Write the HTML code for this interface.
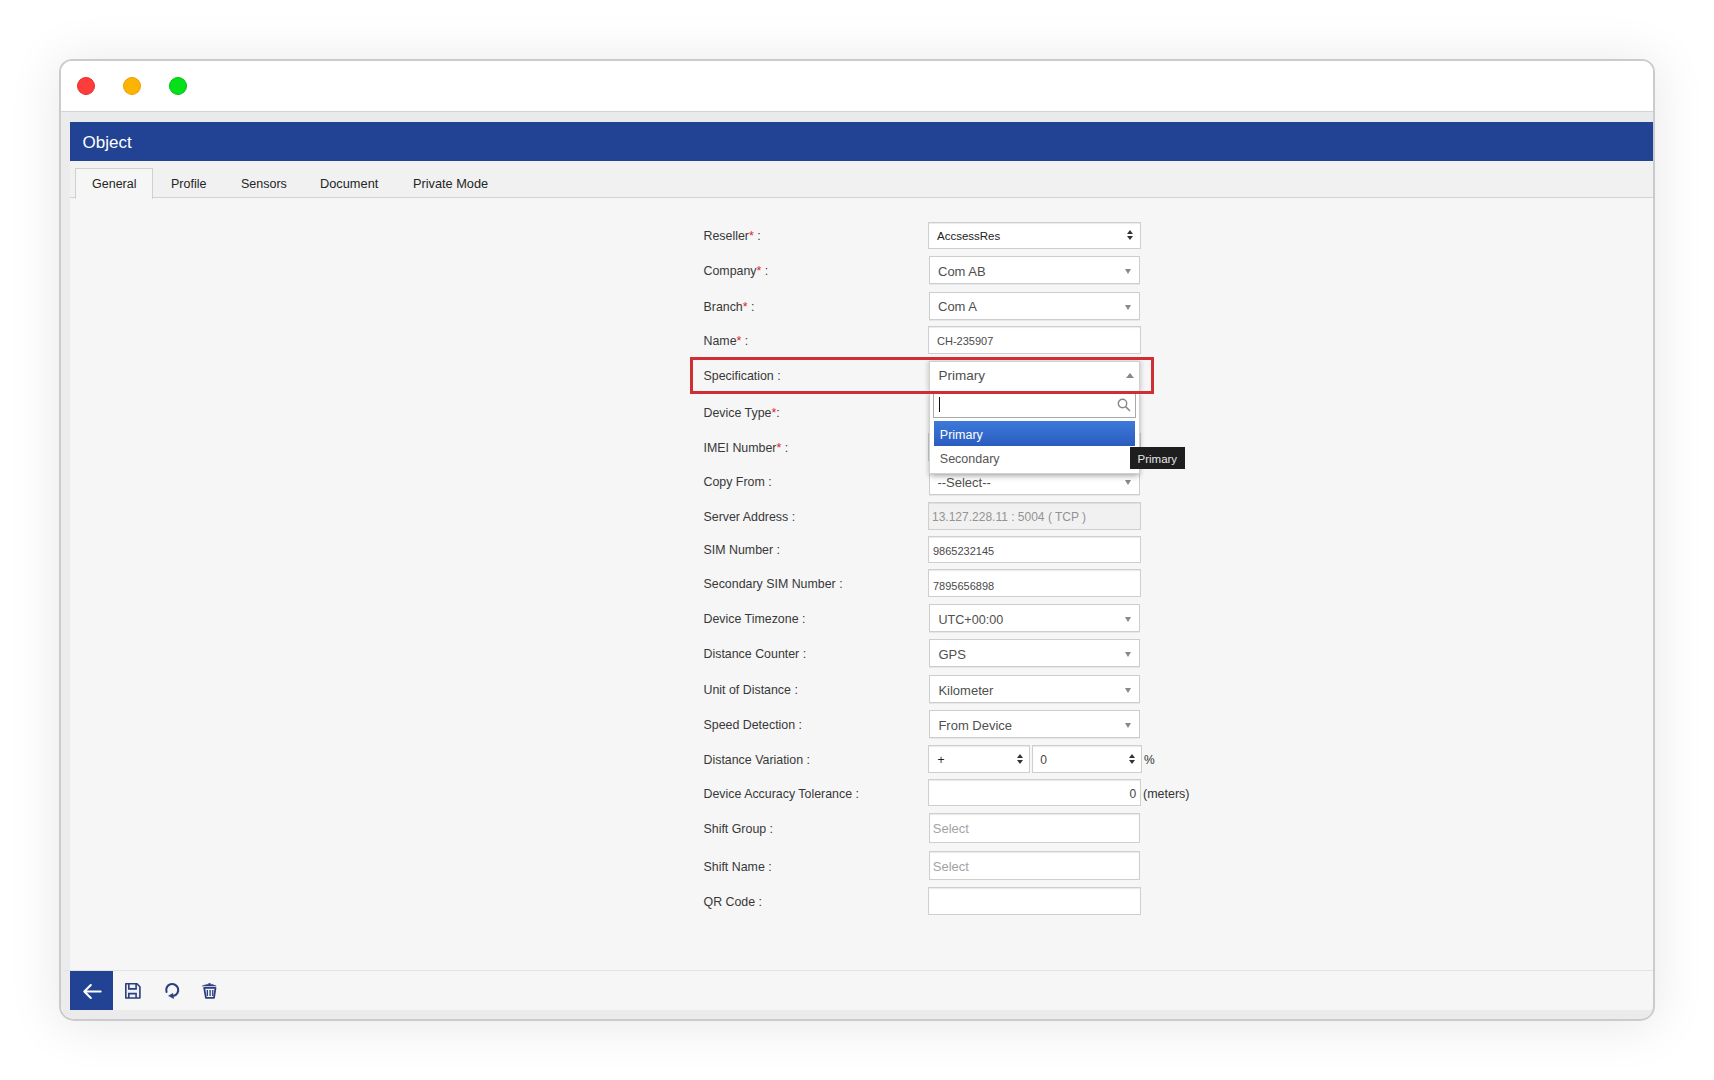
<!DOCTYPE html>
<html><head><meta charset="utf-8">
<style>
*{box-sizing:border-box;margin:0;padding:0}
html,body{width:1714px;height:1080px;overflow:hidden;background:#fff;font-family:"Liberation Sans",sans-serif}
.abs{position:absolute}
#shadow{position:absolute;left:59px;top:59px;width:1596px;height:962px;border-radius:13px 13px 15px 15px;box-shadow:0 3px 50px 4px rgba(0,0,0,0.085)}
#win{position:absolute;left:59px;top:59px;width:1596px;height:962px;border:2px solid #c9cbcd;border-radius:13px 13px 15px 15px;overflow:hidden;background:#f6f6f6}
.dot{position:absolute;width:18px;height:18px;border-radius:50%}
.lbl{position:absolute;left:703.5px;font-size:12.4px;color:#383838;white-space:nowrap;line-height:16px}
.lbl b{color:#d9262a;font-weight:normal}
.inp{position:absolute;background:#fff;border:1px solid #cfcfcf;box-shadow:inset 0 1px 1px rgba(0,0,0,0.09)}
.sel{position:absolute;background:#fff;border:1px solid #cdcdcd;box-shadow:0 1px 0 rgba(0,0,0,0.06)}
.txt{position:absolute;white-space:nowrap;line-height:16px}
.tri{position:absolute;width:0;height:0;border-left:3.75px solid transparent;border-right:3.75px solid transparent;border-top:5px solid #888}
.triu{position:absolute;width:0;height:0;border-left:4px solid transparent;border-right:4px solid transparent;border-bottom:5px solid #888}
.ud{position:absolute;width:8px;height:10px}
.ud:before{content:"";position:absolute;left:0.5px;top:0;border-left:3.5px solid transparent;border-right:3.5px solid transparent;border-bottom:4px solid #333}
.ud:after{content:"";position:absolute;left:0.5px;top:5.5px;border-left:3.5px solid transparent;border-right:3.5px solid transparent;border-top:4px solid #333}
</style></head>
<body>
<div id="shadow"></div>
<div id="win">
  <div class="abs" style="left:0;top:0;width:1592px;height:51px;background:#fff;border-bottom:1px solid #d2d3d4"></div>
  <div class="dot" style="left:16px;top:16px;background:#fc3d39;border:0.5px solid #e3302e"></div>
  <div class="dot" style="left:62px;top:16px;background:#fdb302;border:0.5px solid #e9a200"></div>
  <div class="dot" style="left:108px;top:16px;background:#05e01b;border:0.5px solid #03bf14"></div>
  <div class="abs" style="left:0;top:51px;width:1592px;height:10px;background:#e9eaeb"></div>
  <div class="abs" style="left:0;top:51px;width:9px;height:900px;background:#ececee"></div>
  <div class="abs" style="left:9px;top:61px;width:1583px;height:39px;background:#224294"></div>
  <div class="txt" style="left:21.5px;top:71.5px;font-size:17px;line-height:20px;color:#fff">Object</div>
  <div class="abs" style="left:9px;top:100px;width:1583px;height:37px;background:#f1f1f1;border-bottom:1px solid #d3d3d3"></div>
  <div class="abs" style="left:14px;top:107px;width:78px;height:31px;background:#f6f6f6;border:1px solid #d0d0d0;border-bottom:none"></div>
  <div class="txt" style="left:31px;top:114.5px;font-size:12.5px;color:#252525">General</div>
  <div class="txt" style="left:110px;top:114.5px;font-size:12.5px;color:#252525">Profile</div>
  <div class="txt" style="left:180px;top:114.5px;font-size:12.5px;color:#252525">Sensors</div>
  <div class="txt" style="left:259px;top:114.5px;font-size:12.8px;color:#252525">Document</div>
  <div class="txt" style="left:352px;top:114.5px;font-size:12.75px;color:#252525">Private Mode</div>
  <div class="abs" style="left:3px;top:909px;width:1589px;height:1px;background:#e3e3e3"></div>
  <div class="abs" style="left:0;top:949px;width:1592px;height:10px;background:#ebebeb"></div>
  <div class="abs" style="left:9px;top:910px;width:43px;height:39px;background:#224294"></div>
</div>
<div id="form" class="abs" style="left:0;top:0">
<div class="lbl" style="top:228.1px">Reseller<b>*</b> :</div>
<div class="lbl" style="top:262.8px">Company<b>*</b> :</div>
<div class="lbl" style="top:298.6px">Branch<b>*</b> :</div>
<div class="lbl" style="top:332.8px">Name<b>*</b> :</div>
<div class="lbl" style="top:367.8px">Specification :</div>
<div class="lbl" style="top:405.2px">Device Type<b>*</b>:</div>
<div class="lbl" style="top:439.8px">IMEI Number<b>*</b> :</div>
<div class="lbl" style="top:474.3px">Copy From :</div>
<div class="lbl" style="top:508.5px">Server Address :</div>
<div class="lbl" style="top:542.3px">SIM Number :</div>
<div class="lbl" style="top:575.5px">Secondary SIM Number :</div>
<div class="lbl" style="top:610.9px">Device Timezone :</div>
<div class="lbl" style="top:646.4px">Distance Counter :</div>
<div class="lbl" style="top:681.9px">Unit of Distance :</div>
<div class="lbl" style="top:717.2px">Speed Detection :</div>
<div class="lbl" style="top:752.1px">Distance Variation :</div>
<div class="lbl" style="top:785.6px">Device Accuracy Tolerance :</div>
<div class="lbl" style="top:821.1px">Shift Group :</div>
<div class="lbl" style="top:858.7px">Shift Name :</div>
<div class="lbl" style="top:894.2px">QR Code :</div>
<div class="inp" style="left:928px;top:222px;width:213px;height:27px;"></div>
<div class="sel" style="left:929px;top:256px;width:211px;height:28px;"></div>
<div class="sel" style="left:929px;top:292px;width:211px;height:28px;"></div>
<div class="inp" style="left:928px;top:326px;width:213px;height:28px;"></div>
<div class="sel" style="left:929px;top:398px;width:211px;height:28px;"></div>
<div class="inp" style="left:928px;top:433px;width:213px;height:28px;"></div>
<div class="sel" style="left:929px;top:467px;width:211px;height:28px;"></div>
<div class="inp" style="left:928px;top:502px;width:213px;height:28px;background:#f1f1f1"></div>
<div class="inp" style="left:928px;top:536px;width:213px;height:27px;"></div>
<div class="inp" style="left:928px;top:569px;width:213px;height:28px;"></div>
<div class="sel" style="left:929px;top:604px;width:211px;height:28px;"></div>
<div class="sel" style="left:929px;top:639px;width:211px;height:28px;"></div>
<div class="sel" style="left:929px;top:675px;width:211px;height:28px;"></div>
<div class="sel" style="left:929px;top:710px;width:211px;height:28px;"></div>
<div class="inp" style="left:928px;top:745px;width:102px;height:28px;"></div>
<div class="inp" style="left:1032px;top:745px;width:110px;height:28px;"></div>
<div class="inp" style="left:928px;top:779px;width:213px;height:27px;"></div>
<div class="inp" style="left:929px;top:813px;width:211px;height:30px;"></div>
<div class="inp" style="left:929px;top:851px;width:211px;height:29px;"></div>
<div class="inp" style="left:928px;top:887px;width:213px;height:28px;"></div>
<div class="tri" style="left:1125.4px;top:269px"></div>
<div class="tri" style="left:1125.4px;top:305px"></div>
<div class="tri" style="left:1125.4px;top:480px"></div>
<div class="tri" style="left:1125.4px;top:617px"></div>
<div class="tri" style="left:1125.4px;top:652px"></div>
<div class="tri" style="left:1125.4px;top:688px"></div>
<div class="tri" style="left:1125.4px;top:723px"></div>
<div class="ud" style="left:1126px;top:230.3px"></div>
<div class="ud" style="left:1016.5px;top:754px"></div>
<div class="ud" style="left:1128px;top:754px"></div>
<div class="txt" style="left:937px;top:228.2px;font-size:11.5px;color:#222">AccsessRes</div>
<div class="txt" style="left:938px;top:264.0px;font-size:13px;color:#4f4f4f">Com AB</div>
<div class="txt" style="left:938px;top:299.3px;font-size:13px;color:#4f4f4f">Com A</div>
<div class="txt" style="left:937px;top:332.9px;font-size:11px;color:#4a4a4a">CH-235907</div>
<div class="txt" style="left:937.4px;top:475.1px;font-size:13px;color:#4f4f4f">--Select--</div>
<div class="txt" style="left:932px;top:508.6px;font-size:12px;color:#939393">13.127.228.11 : 5004 ( TCP )</div>
<div class="txt" style="left:933px;top:543.0px;font-size:11px;color:#4a4a4a">9865232145</div>
<div class="txt" style="left:933px;top:577.7px;font-size:11px;color:#4a4a4a">7895656898</div>
<div class="txt" style="left:938.4px;top:611.9px;font-size:12.6px;color:#4f4f4f">UTC+00:00</div>
<div class="txt" style="left:938.4px;top:647.0px;font-size:13px;color:#4f4f4f">GPS</div>
<div class="txt" style="left:938.4px;top:683.1px;font-size:13px;color:#4f4f4f">Kilometer</div>
<div class="txt" style="left:938.4px;top:718.3px;font-size:13px;color:#4f4f4f">From Device</div>
<div class="txt" style="left:937.4px;top:752.2px;font-size:12px;color:#222">+</div>
<div class="txt" style="left:1040.3px;top:752.2px;font-size:12px;color:#444">0</div>
<div class="txt" style="left:1144px;top:752.2px;font-size:12px;color:#333">%</div>
<div class="txt" style="left:1143px;top:785.9px;font-size:12.5px;color:#333">(meters)</div>
<div class="txt" style="left:1129.6px;top:786.0px;font-size:12px;color:#444">0</div>
<div class="txt" style="left:932.8px;top:821.0px;font-size:13px;color:#a3a3a3">Select</div>
<div class="txt" style="left:932.8px;top:858.7px;font-size:13px;color:#a3a3a3">Select</div>
<!-- dropdown -->
<div class="abs" style="left:929px;top:390px;width:211px;height:84px;background:#fff;border:1px solid #d0d0d0;border-top:none;box-shadow:0 4px 6px -1px rgba(0,0,0,0.18),-2px 2px 4px -1px rgba(0,0,0,0.1),2px 2px 4px -1px rgba(0,0,0,0.1)"></div>
<div class="abs" style="left:933px;top:393px;width:203px;height:25px;background:#fff;border:1px solid #aaa"></div>
<div class="abs" style="left:939px;top:397px;width:1px;height:15px;background:#111"></div>
<svg class="abs" style="left:1116px;top:397px" width="16" height="16" viewBox="0 0 16 16"><circle cx="6.5" cy="6.5" r="4.2" fill="none" stroke="#888" stroke-width="1.4"/><line x1="9.6" y1="9.6" x2="14" y2="14" stroke="#888" stroke-width="1.5"/></svg>
<div class="abs" style="left:934px;top:421px;width:201px;height:25px;background:linear-gradient(#3d7ad9,#2a5cc0)"></div>
<div class="txt" style="left:939.8px;top:426.5px;font-size:12.5px;color:#fff">Primary</div>
<div class="txt" style="left:939.8px;top:451px;font-size:12.5px;color:#555">Secondary</div>
<!-- spec select open -->
<div class="abs" style="left:929px;top:361px;width:211px;height:30px;background:#fff;border:1px solid #cfcfcf;border-bottom:none;box-shadow:-2px 0 4px rgba(0,0,0,0.12),2px 0 4px rgba(0,0,0,0.12)"></div>
<div class="txt" style="left:938.5px;top:367.9px;font-size:13.5px;color:#505050">Primary</div>
<div class="triu" style="left:1126px;top:372.5px"></div>
<!-- tooltip -->
<div class="abs" style="left:1130px;top:447px;width:55px;height:22px;background:#1e1e1e"></div>
<div class="txt" style="left:1137.5px;top:450.5px;font-size:11.5px;color:#e6e6e6">Primary</div>
<!-- red highlight -->
<div class="abs" style="left:690px;top:357px;width:464px;height:37px;border:3.5px solid #cf2f33"></div>
<!-- footer icons -->
<svg class="abs" style="left:82px;top:982.5px" width="20" height="17" viewBox="0 0 20 17"><path d="M18.6 8.5H2.8M8.8 2L2.3 8.5L8.8 15" fill="none" stroke="#fff" stroke-width="2.1" stroke-linecap="round" stroke-linejoin="round"/></svg>
<svg class="abs" style="left:125px;top:983px" width="16" height="16" viewBox="0 0 16 16"><path d="M0.8 0.8H12L14.9 3.7V15H0.8Z" fill="#eef1f8" stroke="#2d3f7c" stroke-width="1.6" stroke-linejoin="round"/><path d="M3.8 0.8V5.9H11.1V0.8M3.8 15V10.6H11.1V15" fill="none" stroke="#2d3f7c" stroke-width="1.6"/></svg>
<svg class="abs" style="left:164px;top:982px" width="17" height="18" viewBox="0 0 17 18"><path d="M2.53 9.95A6 6 0 1 1 9.75 13.8" fill="none" stroke="#2d3f7c" stroke-width="2.1" stroke-linecap="round"/><path d="M4.6 13.8L8.8 11.4L9.6 16.6Z" fill="#2d3f7c" stroke="#2d3f7c" stroke-width="0.6" stroke-linejoin="round"/></svg>
<svg class="abs" style="left:202px;top:983px" width="15" height="16" viewBox="0 0 15 16"><path d="M0.2 3L4.8 1.4H6.2L6.9 0.2H8.1L8.8 1.4H10.2L14.2 3Z" fill="#2d3f7c" stroke="#2d3f7c" stroke-width="0.5" stroke-linejoin="round"/><path d="M2.2 4.9H13.5L12 14.9H3.9Z" fill="#eef1f8" stroke="#2d3f7c" stroke-width="1.8" stroke-linejoin="round"/><rect x="4.7" y="7" width="1.3" height="6" fill="#2d3f7c"/><rect x="7.45" y="7" width="1.3" height="6" fill="#2d3f7c"/><rect x="10.1" y="7" width="1.3" height="6" fill="#2d3f7c"/></svg>

</div>
</body></html>
